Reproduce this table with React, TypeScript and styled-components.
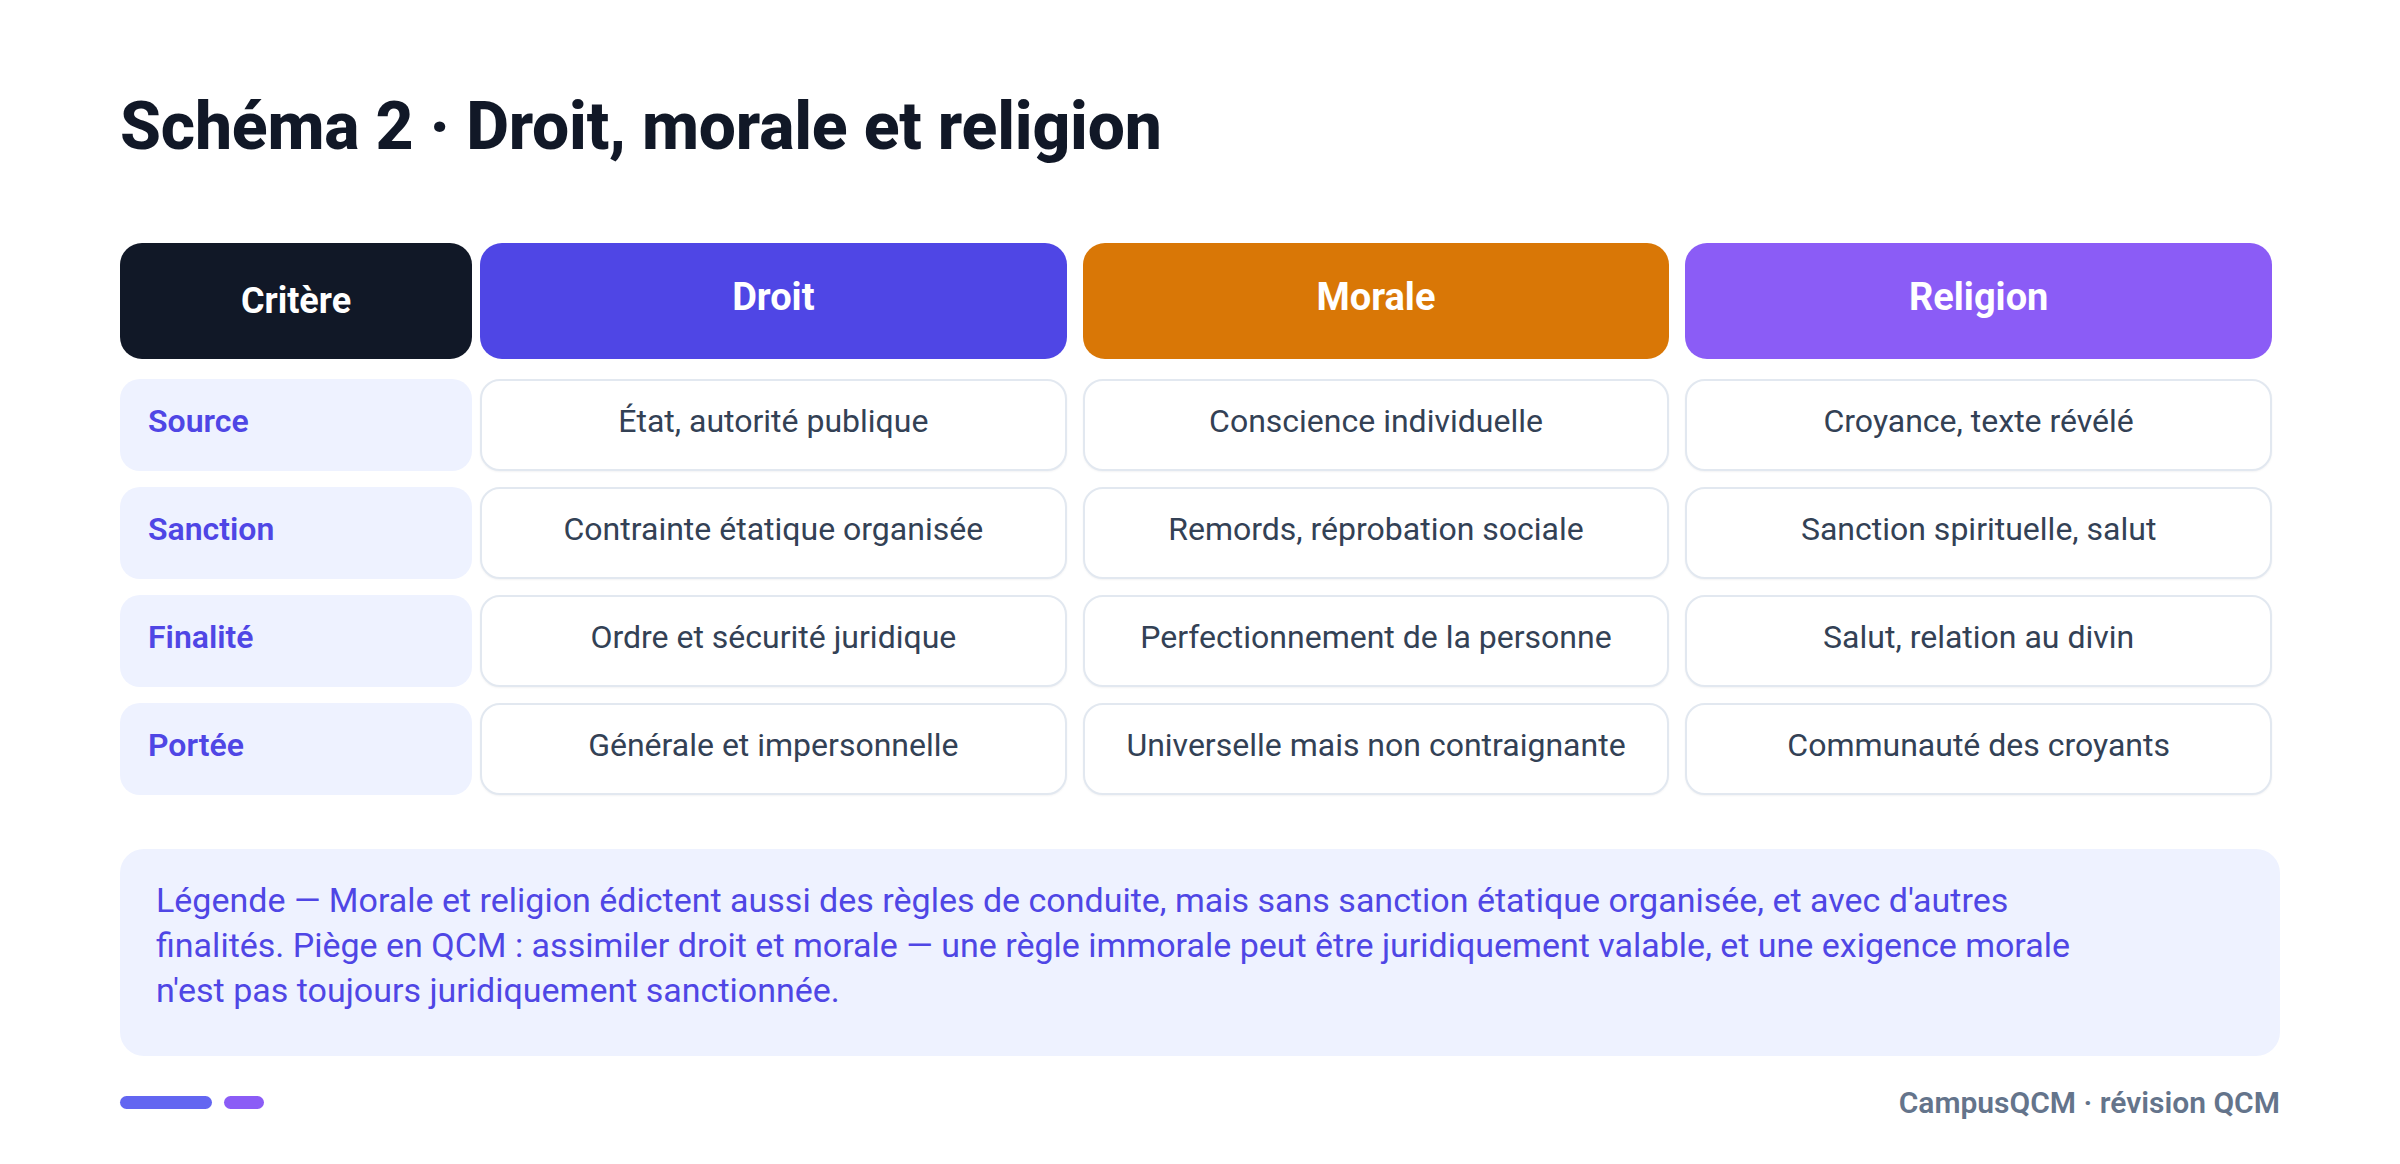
import React from "react";
import styled, { createGlobalStyle } from "styled-components";

const GlobalStyle = createGlobalStyle`
  html, body {
    margin: 0;
    padding: 0;
    background: #ffffff;
  }
  body {
    font-family: Roboto, "Noto Sans", "Liberation Sans", sans-serif;
    -webkit-font-smoothing: antialiased;
  }
  * { box-sizing: border-box; }
`;

const Page = styled.main`
  width: 2400px;
  height: 1164px;
  padding: 87px 120px 0;
  display: flex;
  flex-direction: column;
  background: #ffffff;
`;

const Title = styled.h1`
  margin: 0;
  font-family: Roboto, "Noto Sans", sans-serif;
  font-weight: 800;
  font-size: 66px;
  line-height: 1.2;
  color: #111827;
  letter-spacing: -0.2px;
`;

const Table = styled.section`
  margin-top: 77px;
  display: flex;
  flex-direction: column;
`;

const Row = styled.div<{ $header?: boolean }>`
  display: grid;
  grid-template-columns: 352px repeat(3, 1fr);
  column-gap: 8px;
  height: ${(p) => (p.$header ? "116px" : "92px")};
  margin-bottom: ${(p) => (p.$header ? "20px" : "16px")};
  &:last-child {
    margin-bottom: 0;
  }
`;

const HeadCell = styled.div<{ $bg: string; $first?: boolean }>`
  background: ${(p) => p.$bg};
  border-radius: 22px;
  display: flex;
  align-items: center;
  justify-content: center;
  color: #ffffff;
  font-weight: 700;
  font-size: ${(p) => (p.$first ? "36px" : "38px")};
  padding-bottom: ${(p) => (p.$first ? "0" : "9px")};
  margin-right: ${(p) => (p.$first ? "0" : "8px")};
`;

const LabelCell = styled.div`
  background: #eef2ff;
  border-radius: 20px;
  display: flex;
  align-items: center;
  padding: 0 28px 8px;
  color: #4f46e5;
  font-weight: 600;
  font-size: 32px;
`;

const ValueCell = styled.div`
  background: #ffffff;
  border: 2px solid #e2e8f0;
  border-radius: 20px;
  box-shadow: 0 1px 2px rgba(15, 23, 42, 0.05);
  margin-right: 8px;
  display: flex;
  align-items: center;
  justify-content: center;
  padding: 0 20px 8px;
  color: #334155;
  font-weight: 400;
  font-size: 32px;
  text-align: center;
`;

const Legend = styled.div`
  margin-top: 54px;
  background: #eef2ff;
  border-radius: 24px;
  padding: 29px 36px 43px;
`;

const LegendText = styled.p`
  margin: 0;
  max-width: 1965px;
  color: #4f46e5;
  font-size: 34px;
  line-height: 45px;
  font-weight: 400;
`;

const Footer = styled.footer`
  margin-top: 26px;
  height: 40px;
  display: flex;
  align-items: center;
  justify-content: space-between;
`;

const Bars = styled.div`
  display: flex;
  gap: 12px;
  align-items: center;
`;

const Bar = styled.span<{ $w: number; $color: string }>`
  display: block;
  width: ${(p) => p.$w}px;
  height: 13px;
  border-radius: 7px;
  background: ${(p) => p.$color};
`;

const Brand = styled.div`
  color: #64748b;
  font-weight: 600;
  font-size: 30px;
`;

const columns = [
  { name: "Droit", color: "#4f46e5" },
  { name: "Morale", color: "#d97706" },
  { name: "Religion", color: "#8b5cf6" },
];

const rows: { label: string; values: string[] }[] = [
  {
    label: "Source",
    values: ["État, autorité publique", "Conscience individuelle", "Croyance, texte révélé"],
  },
  {
    label: "Sanction",
    values: [
      "Contrainte étatique organisée",
      "Remords, réprobation sociale",
      "Sanction spirituelle, salut",
    ],
  },
  {
    label: "Finalité",
    values: [
      "Ordre et sécurité juridique",
      "Perfectionnement de la personne",
      "Salut, relation au divin",
    ],
  },
  {
    label: "Portée",
    values: [
      "Générale et impersonnelle",
      "Universelle mais non contraignante",
      "Communauté des croyants",
    ],
  },
];

export default function App() {
  return (
    <>
      <GlobalStyle />
      <Page>
        <Title>Schéma 2 · Droit, morale et religion</Title>
        <Table>
          <Row $header>
            <HeadCell $bg="#111827" $first>
              Critère
            </HeadCell>
            {columns.map((c) => (
              <HeadCell key={c.name} $bg={c.color}>
                {c.name}
              </HeadCell>
            ))}
          </Row>
          {rows.map((r) => (
            <Row key={r.label}>
              <LabelCell>{r.label}</LabelCell>
              {r.values.map((v) => (
                <ValueCell key={v}>{v}</ValueCell>
              ))}
            </Row>
          ))}
        </Table>
        <Legend>
          <LegendText>
            Légende — Morale et religion édictent aussi des règles de conduite, mais sans
            sanction étatique organisée, et avec d'autres finalités. Piège en QCM : assimiler
            droit et morale — une règle immorale peut être juridiquement valable, et une
            exigence morale n'est pas toujours juridiquement sanctionnée.
          </LegendText>
        </Legend>
        <Footer>
          <Bars>
            <Bar $w={92} $color="#6366f1" />
            <Bar $w={40} $color="#8b5cf6" />
          </Bars>
          <Brand>CampusQCM · révision QCM</Brand>
        </Footer>
      </Page>
    </>
  );
}
